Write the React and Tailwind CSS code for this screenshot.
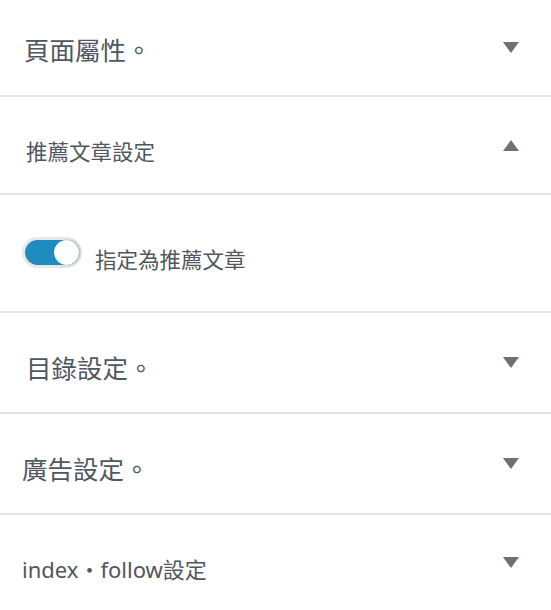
import React, { useState } from "react";

const FONT = { fontFamily: '"Noto Sans", "Noto Sans CJK TC", sans-serif' };

function Arrow({ up }) {
  return (
    <svg width="16" height="11" viewBox="0 0 16 11" className="shrink-0">
      <path d={up ? "M8 0 L16 11 L0 11 Z" : "M0 0 L16 0 L8 11 Z"} fill="#6b7177" />
    </svg>
  );
}

function Row({ title, size, pl, h, up }) {
  return (
    <div
      className={`flex items-center justify-between border-b-2 border-[#e2e2e7] pr-[32px] ${h} ${pl}`}
    >
      <span className={`${size} text-[#50575e] leading-none`}>{title}</span>
      <Arrow up={up} />
    </div>
  );
}

export default function App() {
  const [on, setOn] = useState(true);

  return (
    <div className="w-[551px] h-[610px] bg-white overflow-hidden" style={FONT}>
      <Row title="頁面屬性。" size="text-[25.5px] pt-[6px]" pl="pl-[24px]" h="h-[97px]" />
      <Row title="推薦文章設定" size="text-[21.5px] pt-[13px]" pl="pl-[26px]" h="h-[98px]" up />

      <div className="h-[118px] border-b-2 border-[#e2e2e7] pl-[22px] flex items-center">
        <button
          onClick={() => setOn(!on)}
          className="w-[60px] h-[31px] rounded-full bg-[#e6e7ea] p-[3px] -mt-[2px] shrink-0"
        >
          <span className={`flex items-center w-full h-full rounded-full ${on ? "bg-[#1e8cbe] justify-end" : "bg-[#c3c4c7] justify-start"}`}>
            <span className="w-[25px] h-[25px] rounded-full bg-white shadow-[1px_0_2px_rgba(0,0,0,0.25)]" />
          </span>
        </button>
        <span className="ml-[13px] pt-[13px] text-[21.5px] text-[#50575e] leading-none">指定為推薦文章</span>
      </div>

      <Row title="目錄設定。" size="text-[25.5px] pt-[13px]" pl="pl-[26px]" h="h-[101px]" />
      <Row title="廣告設定。" size="text-[25.5px] pt-[13px]" pl="pl-[22px]" h="h-[101px]" />
      <Row title="index・follow設定" size="text-[22px] pt-[12px]" pl="pl-[22px]" h="h-[97px]" />
    </div>
  );
}
